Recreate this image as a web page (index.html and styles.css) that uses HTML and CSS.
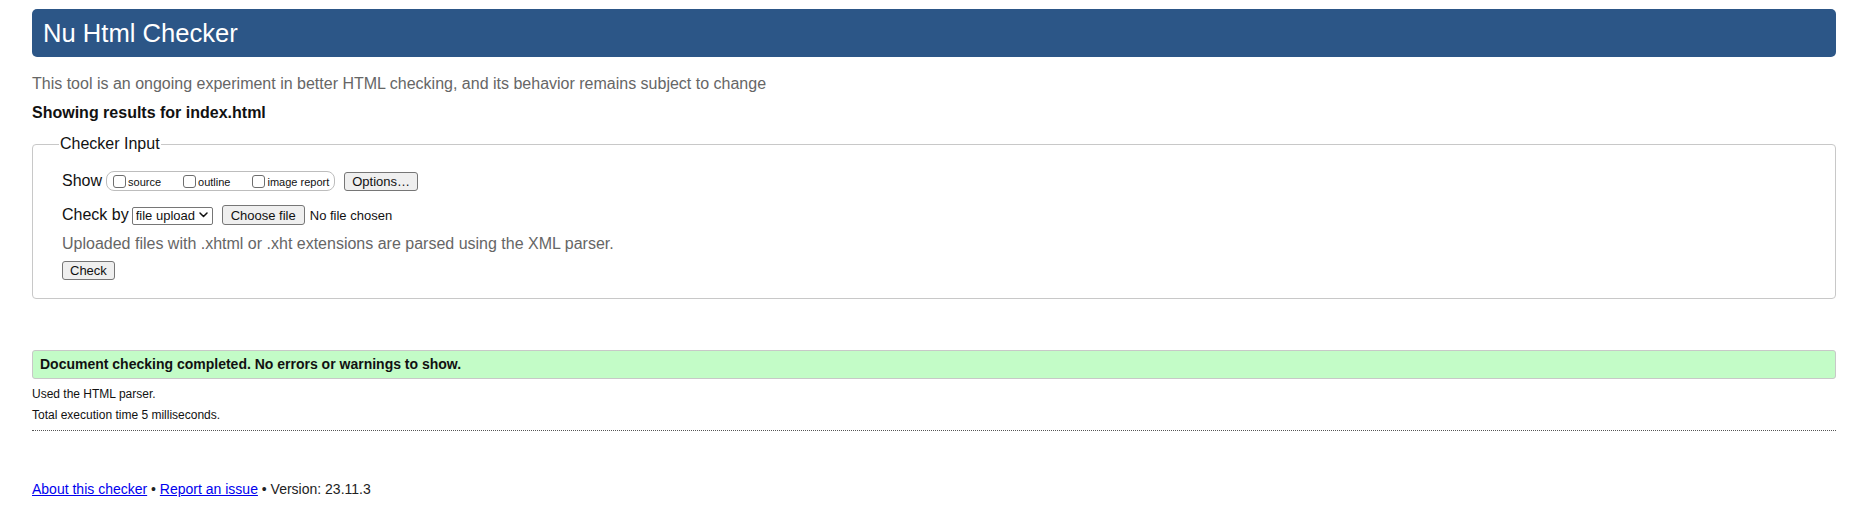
FILE: index.html
```html
<!DOCTYPE html>
<html lang="en">
<head>
<meta charset="utf-8">
<title>Nu Html Checker</title>
<link rel="stylesheet" href="styles.css">
</head>
<body>
<header class="masthead"><h1 class="title">Nu Html Checker</h1></header>
<p class="intro">This tool is an ongoing experiment in better HTML checking, and its behavior remains subject to change</p>
<p class="showing">Showing results for index.html</p>
<form class="checker-form">
  <fieldset class="checker">
    <legend class="legend">Checker Input</legend>
    <div class="row row-show">
      <span class="label">Show</span>
      <span class="show-group">
        <label class="opt"><input type="checkbox" class="cb"><span>source</span></label>
        <label class="opt"><input type="checkbox" class="cb"><span>outline</span></label>
        <label class="opt"><input type="checkbox" class="cb"><span>image report</span></label>
      </span>
      <button type="button" class="btn btn-options">Options…</button>
    </div>
    <div class="row row-by">
      <span class="label">Check by</span>
      <span class="select-wrap">
        <select class="select"><option>file upload</option></select>
        <svg class="chev" width="9" height="6" viewBox="0 0 9 6" aria-hidden="true"><path d="M1 1 L4.5 4.5 L8 1" fill="none" stroke="#111" stroke-width="1.5" stroke-linecap="round" stroke-linejoin="round"/></svg>
      </span>
      <button type="button" class="btn btn-file">Choose file</button>
      <span class="nofile">No file chosen</span>
    </div>
    <p class="hint">Uploaded files with .xhtml or .xht extensions are parsed using the XML parser.</p>
    <div class="row row-check">
      <button type="button" class="btn btn-check">Check</button>
    </div>
  </fieldset>
</form>
<p class="success">Document checking completed. No errors or warnings to show.</p>
<p class="details">Used the HTML parser.</p>
<p class="details details-time">Total execution time 5 milliseconds.</p>
<hr class="rule">
<p class="footer"><a href="#" class="link">About this checker</a> • <a href="#" class="link">Report an issue</a> • Version: 23.11.3</p>
</body>
</html>
```
FILE: styles.css
```css
html, body {
  margin: 0;
  background: #fff;
}
body {
  padding: 9px 30px 0 32px;
  font-family: "Liberation Sans", Arial, Helvetica, sans-serif;
  color: #111;
}
.masthead {
  height: 48px;
  background: #2c5687;
  border-radius: 5px;
}
.title {
  margin: 0;
  padding-left: 11px;
  font-size: 25.6px;
  font-weight: normal;
  line-height: 48px;
  color: #fff;
}
.intro {
  margin: 17px 0 0;
  font-size: 16px;
  line-height: 20px;
  color: #666;
}
.showing {
  margin: 9px 0 0;
  font-size: 16px;
  font-weight: bold;
  line-height: 20px;
  color: #111;
}
.checker-form {
  margin: 11px 0 0;
}
.checker {
  margin: 0;
  padding: 0 0 16px 29px;
  border: 1px solid #c8c8c8;
  border-radius: 4px;
  min-width: 0;
}
.legend {
  margin-left: -3px;
  padding: 0 1px;
  font-size: 16px;
  line-height: 20px;
  color: #111;
}
.row {
  display: flex;
  align-items: center;
  height: 24px;
}
.row-show {
  margin-top: 15px;
}
.row-by {
  margin-top: 10px;
}
.label {
  font-size: 16px;
  color: #111;
}
.show-group {
  display: inline-flex;
  align-items: center;
  gap: 21px;
  height: 18px;
  margin-left: 4px;
  padding: 0 5px 0 5px;
  border: 1px solid #bdbdbd;
  border-radius: 8px;
}
.opt {
  display: inline-flex;
  align-items: center;
  font-size: 11px;
  color: #111;
}
.opt span {
  margin-left: 2px;
  position: relative;
  top: 1px;
}
.cb {
  -webkit-appearance: none;
  appearance: none;
  width: 13px;
  height: 13px;
  margin: 0 0 0 1px;
  border: 1px solid #6e6e6e;
  border-radius: 3px;
  background: #fff;
}
.btn {
  -webkit-appearance: none;
  appearance: none;
  height: 19px;
  padding: 0 8px;
  font-family: "Liberation Sans", Arial, Helvetica, sans-serif;
  font-size: 13px;
  line-height: 17px;
  color: #111;
  background: #efefef;
  border: 1px solid #767676;
  border-radius: 3px;
}
.btn-options {
  margin-left: 9px;
  padding: 0 7px;
}
.btn-check {
  padding: 0 7px;
}
.select-wrap {
  position: relative;
  display: inline-block;
  margin-left: 3px;
  height: 18px;
}
.select {
  -webkit-appearance: none;
  appearance: none;
  width: 81px;
  height: 18px;
  padding: 0 0 0 3px;
  font-family: "Liberation Sans", Arial, Helvetica, sans-serif;
  font-size: 13px;
  line-height: 16px;
  color: #111;
  background: #fff;
  border: 1px solid #767676;
  border-radius: 2px;
}
.chev {
  position: absolute;
  right: 5px;
  top: 6px;
  pointer-events: none;
}
.btn-file {
  margin-left: 9px;
  height: 20px;
}
.nofile {
  margin-left: 5px;
  font-size: 13px;
  color: #111;
}
.hint {
  margin: 7px 0 0;
  font-size: 16px;
  line-height: 20px;
  color: #666;
}
.row-check {
  margin-top: 4px;
}
.success {
  margin: 51px 0 0;
  height: 27px;
  padding: 0 7px;
  font-size: 14px;
  font-weight: bold;
  line-height: 27px;
  color: #111;
  background: #c3fcc7;
  border: 1px solid #c8c8c8;
  border-radius: 3px;
}
.details {
  margin: 7px 0 0;
  font-size: 12px;
  line-height: 16px;
  color: #111;
}
.details-time {
  margin-top: 5px;
}
.rule {
  margin: 7px 0 0;
  height: 0;
  border: 0;
  border-top: 1px dotted #555;
}
.footer {
  margin: 49px 0 0;
  font-size: 14px;
  line-height: 18px;
  color: #222;
}
.link {
  color: #0000ee;
}
```
